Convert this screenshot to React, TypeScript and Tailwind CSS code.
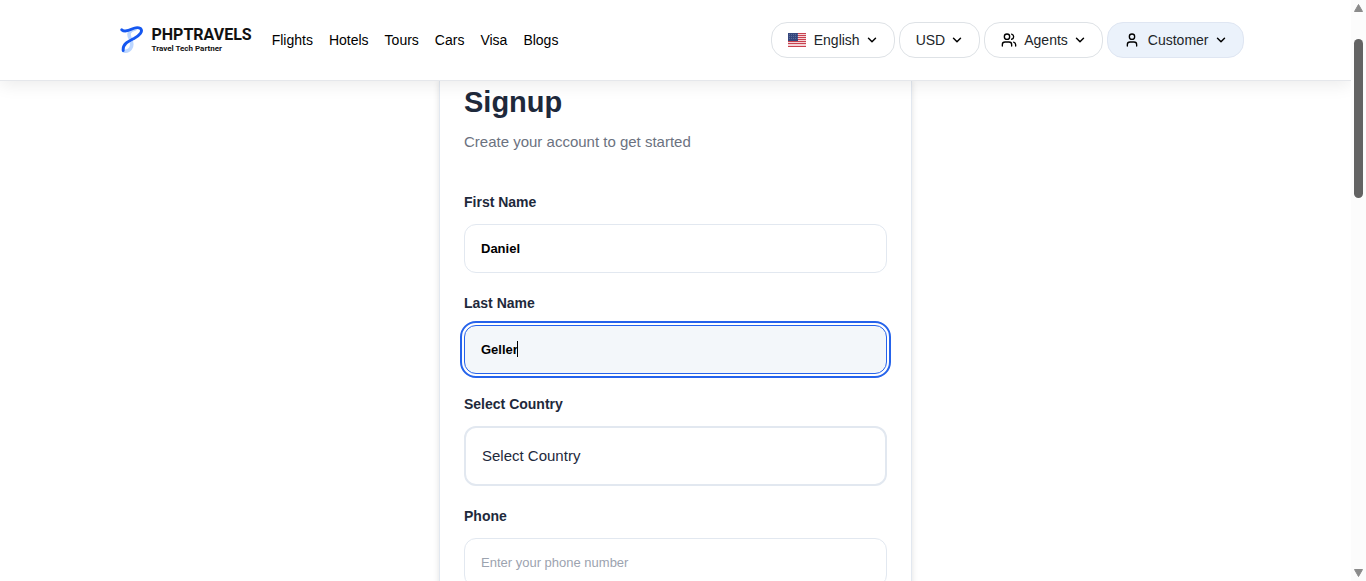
import React from "react";
import { ChevronDown, User, Users } from "lucide-react";

const links = ["Flights", "Hotels", "Tours", "Cars", "Visa", "Blogs"];

function LogoMark() {
  return (
    <svg viewBox="0 0 24 28" className="h-7 w-6 shrink-0" fill="none" strokeLinecap="round" aria-hidden="true">
      <path d="M15 3C9 4.500 8 8 10 12C12 16 13 19 10.500 22.500C9 24.500 6 25.500 4 25" stroke="#bcd6ff" strokeWidth="3.600" />
      <path d="M1.800 3.800C5 6.500 9 4.500 12 3C15 1.500 18 1 20.500 2.500C23.500 5.500 19 10 14 12.500C8 15.500 2.500 18 3.200 24.500" stroke="#1557f0" strokeWidth="2.900" />
    </svg>
  );
}

function Flag() {
  return (
    <svg viewBox="0 0 18 14" className="mr-2 h-[14px] w-[18px]" shapeRendering="crispEdges" aria-hidden="true">
      <rect width="18" height="14" fill="#f3d3d6" />
      {[0, 2, 4, 6, 8, 10, 13].map((y) => (
        <rect key={y} y={y} width="18" height="1" fill="#c9414f" />
      ))}
      <rect width="10" height="8" fill="#35477d" />
      {[1, 3, 5, 7, 9].map((x) =>
        [1, 3, 5].map((y) => <rect key={`${x}-${y}`} x={x} y={y} width="1" height="1" fill="#5c6b98" />)
      )}
    </svg>
  );
}

function MenuButton({ icon, label, active }: { icon?: React.ReactNode; label: string; active?: boolean }) {
  return (
    <button
      type="button"
      className={`flex h-9 items-center rounded-2xl border pr-[15px] pl-4 text-sm text-[#212529] ${
        active ? "border-[#dfe6f2] bg-[#ebf2fb]" : "border-[#dee2e6] bg-white"
      }`}
    >
      {icon}
      <span>{label}</span>
      <ChevronDown className="ml-[5px] size-3.5 text-black" strokeWidth={2.5} />
    </button>
  );
}

const labelStyle = "block text-sm leading-5 font-bold text-[#1e293b]";
const inputStyle =
  "block h-[49px] w-full rounded-xl border px-4 text-[13px] font-semibold text-black placeholder:font-medium placeholder:text-[#9ca3af]";

function Field({ id, label, value, placeholder, active }: {
  id: string;
  label: string;
  value?: string;
  placeholder?: string;
  active?: boolean;
}) {
  return (
    <div className="flex flex-col gap-3">
      <label htmlFor={id} className={labelStyle}>{label}</label>
      <div className="relative">
        <input
          id={id}
          type="text"
          defaultValue={value}
          placeholder={placeholder}
          className={`${inputStyle} ${
            active
              ? "border-[#2563eb] bg-[#f3f7fa] outline-2 outline-offset-2 outline-[#2563eb]"
              : "border-[#e2e8f0] bg-white"
          }`}
        />
        {active && <span className="absolute top-4 left-[53px] h-4 w-px bg-black" />}
      </div>
    </div>
  );
}

export default function App() {
  return (
    <div className="flex h-screen overflow-hidden bg-white font-['Liberation_Sans',Arial,sans-serif]">
      <div className="flex min-w-0 flex-1 flex-col overflow-hidden">
        <header className="z-10 shrink-0 border-b border-[#e5e7eb] bg-white shadow-[0_4px_16px_rgba(0,0,0,0.08)]">
          <div className="mx-auto flex h-20 max-w-[1136px] items-center justify-between pl-3">
            <div className="flex items-center">
              <a href="#" className="flex items-center gap-2 font-['Roboto',sans-serif] text-[#111111]">
                <LogoMark />
                <span className="flex flex-col pt-0.5">
                  <span className="text-base leading-4 font-bold">PHPTRAVELS</span>
                  <span className="text-[8px] leading-3 font-bold">Travel Tech Partner</span>
                </span>
              </a>
              <nav className="ml-5 flex gap-4 text-sm text-black">
                {links.map((link) => (
                  <a key={link} href="#">{link}</a>
                ))}
              </nav>
            </div>
            <div className="flex items-center gap-1">
              <MenuButton icon={<Flag />} label="English" />
              <MenuButton label="USD" />
              <MenuButton icon={<Users className="mr-[7px] size-4 text-black" />} label="Agents" />
              <MenuButton icon={<User className="mr-2 size-4 text-black" />} label="Customer" active />
            </div>
          </div>
        </header>

        <main className="min-h-0 flex-1 overflow-hidden">
          <div className="mx-auto max-w-[473px] border-x border-[#e2e8f0] px-6 pt-[3px] shadow-[0_0_6px_rgba(0,0,0,0.12)]">
            <h1 className="text-[29px] leading-9 font-bold text-[#1e293b]">Signup</h1>
            <p className="mt-[10px] text-[15px] leading-6 text-[#6b7280]">Create your account to get started</p>
            <form className="mt-[38px] flex flex-col gap-5 pb-6">
              <Field id="first-name" label="First Name" value="Daniel" />
              <Field id="last-name" label="Last Name" value="Geller" active />
              <div className="flex flex-col gap-3">
                <label htmlFor="country" className={labelStyle}>Select Country</label>
                <select
                  id="country"
                  className="block h-[60px] w-full appearance-none rounded-xl border-2 border-[#e2e8f0] bg-white px-4 text-[15px] text-[#1e293b]"
                >
                  <option>Select Country</option>
                </select>
              </div>
              <Field id="phone" label="Phone" placeholder="Enter your phone number" />
            </form>
          </div>
        </main>
      </div>

      <div className="flex w-[15px] shrink-0 flex-col items-center bg-[#fcfcfc] py-1" aria-hidden="true">
        <svg viewBox="0 0 9 8" className="h-2 w-[9px]"><path d="M4.500 0.500L8.500 7.500H0.500Z" fill="#8b8b8b" stroke="#8b8b8b" strokeLinejoin="round" /></svg>
        <div className="mt-[27px] h-[159px] w-[9px] rounded-full bg-[#636363]" />
        <svg viewBox="0 0 9 8" className="mt-auto h-2 w-[9px]"><path d="M4.500 7.500L8.500 0.500H0.500Z" fill="#8b8b8b" stroke="#8b8b8b" strokeLinejoin="round" /></svg>
      </div>
    </div>
  );
}
